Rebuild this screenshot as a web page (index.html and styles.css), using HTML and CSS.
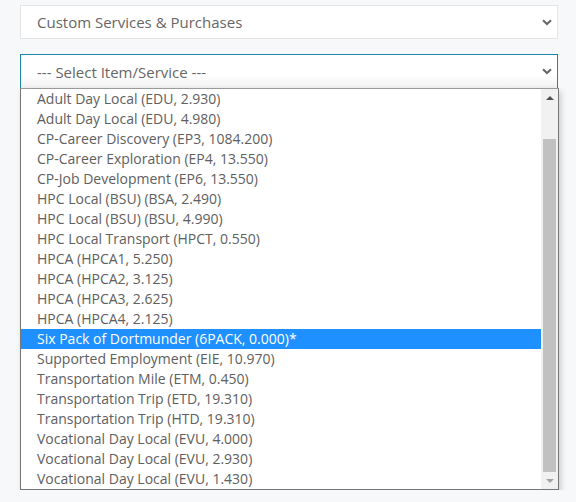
FILE: index.html
```html
<!DOCTYPE html>
<html>
<head>
<meta charset="utf-8">
<link rel="stylesheet" href="styles.css">
</head>
<body>
<div class="page">
  <div class="select first">
    <span class="value">Custom Services &amp; Purchases</span>
    <svg class="chev" width="10" height="7" viewBox="0 0 10 7"><path d="M1 1.2 L5 5 L9 1.2" fill="none" stroke="#666" stroke-width="2"/></svg>
  </div>
  <div class="combo">
    <div class="select second">
      <span class="value">--- Select Item/Service ---</span>
      <svg class="chev" width="10" height="7" viewBox="0 0 10 7"><path d="M1 1.2 L5 5 L9 1.2" fill="none" stroke="#666" stroke-width="2"/></svg>
    </div>
    <div class="list">
      <div class="options">
        <div class="opt">Adult Day Local (EDU, 2.930)</div>
        <div class="opt">Adult Day Local (EDU, 4.980)</div>
        <div class="opt">CP-Career Discovery (EP3, 1084.200)</div>
        <div class="opt">CP-Career Exploration (EP4, 13.550)</div>
        <div class="opt">CP-Job Development (EP6, 13.550)</div>
        <div class="opt">HPC Local (BSU) (BSA, 2.490)</div>
        <div class="opt">HPC Local (BSU) (BSU, 4.990)</div>
        <div class="opt">HPC Local Transport (HPCT, 0.550)</div>
        <div class="opt">HPCA (HPCA1, 5.250)</div>
        <div class="opt">HPCA (HPCA2, 3.125)</div>
        <div class="opt">HPCA (HPCA3, 2.625)</div>
        <div class="opt">HPCA (HPCA4, 2.125)</div>
        <div class="opt sel">Six Pack of Dortmunder (6PACK, 0.000)*</div>
        <div class="opt">Supported Employment (EIE, 10.970)</div>
        <div class="opt">Transportation Mile (ETM, 0.450)</div>
        <div class="opt">Transportation Trip (ETD, 19.310)</div>
        <div class="opt">Transportation Trip (HTD, 19.310)</div>
        <div class="opt">Vocational Day Local (EVU, 4.000)</div>
        <div class="opt">Vocational Day Local (EVU, 2.930)</div>
        <div class="opt">Vocational Day Local (EVU, 1.430)</div>
      </div>
      <div class="scrollbar">
        <div class="arrow up"></div>
        <div class="track"><div class="thumb"></div></div>
        <div class="arrow down"></div>
      </div>
    </div>
  </div>
</div>
</body>
</html>
```
FILE: styles.css
```css
html, body {
  margin: 0;
  padding: 0;
  background: #f7f8fa;
}
.page {
  padding: 5px 18px 0 20px;
  font-family: "Open Sans", "Liberation Sans", sans-serif;
  color: #666;
}
.select {
  box-sizing: border-box;
  height: 34px;
  width: 538px;
  display: flex;
  align-items: center;
  justify-content: space-between;
  padding: 0 5px 0 16px;
  background: #fff;
  font-size: 15px;
  border: 1px solid #e4e5e7;
}
.combo {
  margin-top: 15px;
}
.second {
  height: 35px;
  border: 1px solid #1a87a6;
  background: linear-gradient(#fff 60%, #f1f1f1);
}
.chev {
  display: block;
}
.list {
  box-sizing: border-box;
  width: 539px;
  height: 402px;
  background: #fff;
  border: 1px solid #767676;
  border-top-color: #9a9a9a;
  display: flex;
  box-shadow: 2px 3px 6px rgba(0,0,0,0.18);
  margin-top: -1px;
}
.options {
  flex: 1;
}
.opt {
  height: 20px;
  line-height: 20px;
  font-size: 14px;
  padding-left: 16px;
  color: #606060;
  white-space: nowrap;
}
.opt.sel {
  background: #1e90ff;
  color: #fff;
}
.scrollbar {
  width: 17px;
  background: #f1f1f1;
  display: flex;
  flex-direction: column;
}
.arrow {
  height: 17px;
  display: flex;
  align-items: center;
  justify-content: center;
}
.arrow.up::before {
  content: "";
  border-left: 4px solid transparent;
  border-right: 4px solid transparent;
  border-bottom: 4px solid #505050;
}
.arrow.down::before {
  content: "";
  border-left: 4px solid transparent;
  border-right: 4px solid transparent;
  border-top: 4px solid #a3a3a3;
}
.track {
  flex: 1;
  position: relative;
}
.thumb {
  position: absolute;
  left: 2px;
  right: 2px;
  top: 33px;
  bottom: 0px;
  background: #c1c1c1;
}
```
